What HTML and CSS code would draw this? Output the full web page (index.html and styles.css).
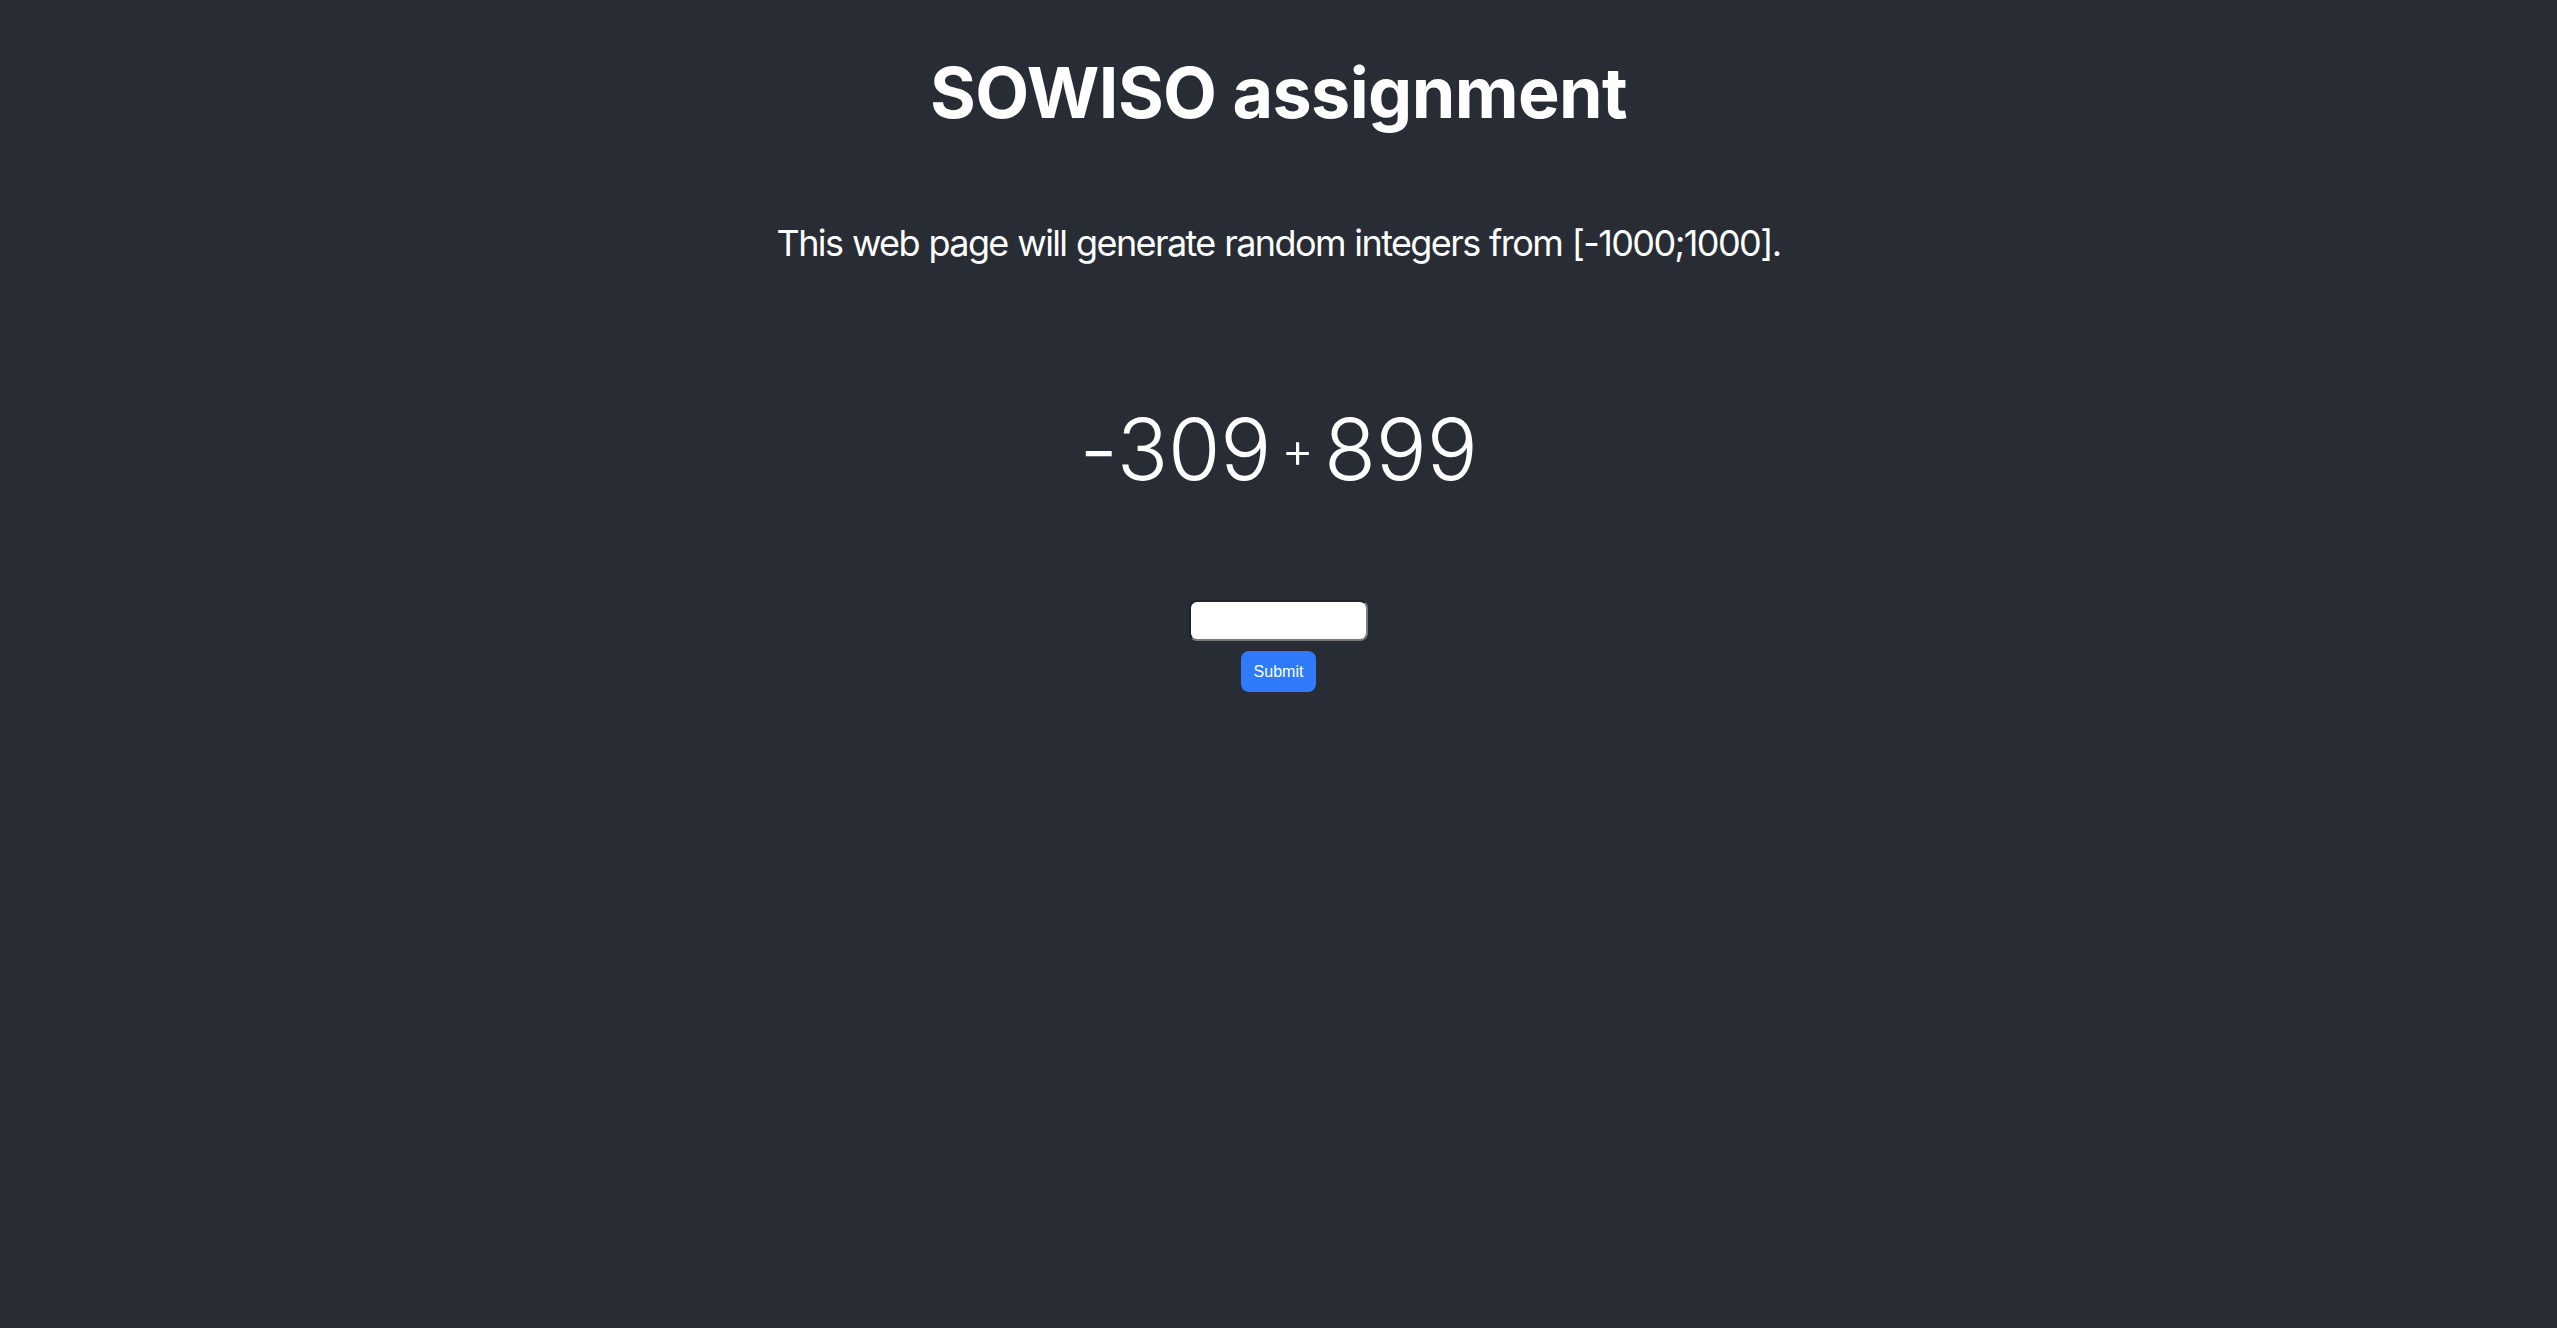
FILE: index.html
```html
<!DOCTYPE html>
<html lang="en">
<head>
<meta charset="utf-8">
<title>SOWISO assignment</title>
<link rel="stylesheet" href="styles.css">
</head>
<body>
<main class="app">
  <h1 class="title">SOWISO assignment</h1>
  <p class="intro">This web page will generate random integers from [-1000;1000].</p>
  <div class="sum">
    <span class="num">-309</span>
    <span class="op">+</span>
    <span class="num">899</span>
  </div>
  <form class="answer">
    <input class="answer-input" type="text">
    <button class="submit" type="button">Submit</button>
  </form>
</main>
</body>
</html>
```
FILE: styles.css
```css
html, body {
  margin: 0;
  padding: 0;
  background: #282c34;
  height: 100%;
}
.app {
  min-height: 100vh;
  display: flex;
  flex-direction: column;
  align-items: center;
  color: #ffffff;
  font-family: Inter, "Noto Sans", sans-serif;
}
.title {
  margin: 0;
  padding-top: 50px;
  font-size: 70px;
  line-height: 86px;
  font-weight: 700;
  letter-spacing: -0.6px;
}
.intro {
  margin: 0;
  padding-top: 85px;
  font-size: 36px;
  line-height: 44px;
  font-weight: 400;
  letter-spacing: -1.6px;
  word-spacing: 1px;
}
.sum {
  display: flex;
  align-items: center;
  gap: 10px;
  margin-top: 135px;
  height: 100px;
}
.num {
  font-size: 85px;
  line-height: 100px;
  font-weight: 300;
  letter-spacing: -0.2px;
}
.op {
  font-size: 50px;
  line-height: 100px;
  font-weight: 300;
}
.answer {
  display: flex;
  flex-direction: column;
  align-items: center;
  gap: 10px;
  margin-top: 100px;
}
.answer-input {
  box-sizing: border-box;
  width: 179px;
  height: 41px;
  background: #ffffff;
  border-style: solid;
  border-width: 2px;
  border-color: #1f2228 #7a7a7a #7a7a7a #1f2228;
  border-radius: 8px;
  padding: 2px 6px;
  font-size: 16px;
  font-family: "Liberation Sans", Arial, sans-serif;
}
.submit {
  box-sizing: border-box;
  height: 41px;
  padding: 0 13px;
  background: #2f7af8;
  color: #ffffff;
  border: none;
  border-radius: 8px;
  font-size: 16px;
  font-family: "Liberation Sans", Arial, sans-serif;
}
```
